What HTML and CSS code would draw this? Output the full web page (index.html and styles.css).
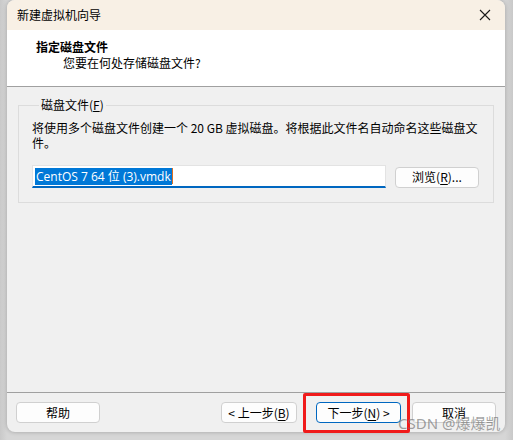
FILE: index.html
```html
<!DOCTYPE html>
<html lang="zh-CN">
<head>
    <meta charset="UTF-8">
    <title>新建虚拟机向导</title>
    <link rel="stylesheet" href="styles.css">
</head>
<body>
    <div class="window">
        <div class="titlebar">
            <span class="title">新建虚拟机向导</span>
            <svg class="close" width="12" height="12" viewBox="0 0 12 12">
                <path d="M1 1 L11 11 M11 1 L1 11" stroke="#1a1a1a" stroke-width="1.1" fill="none"/>
            </svg>
        </div>

        <div class="header">
            <div class="header-title">指定磁盘文件</div>
            <div class="header-sub">您要在何处存储磁盘文件?</div>
        </div>

        <div class="content">
            <fieldset class="group">
                <legend>磁盘文件(<u>F</u>)</legend>
                <p class="desc">将使用多个磁盘文件创建一个 20 GB 虚拟磁盘。将根据此文件名自动命名这些磁盘文件。</p>
                <div class="file-row">
                    <div class="file-input"><span class="selected">CentOS 7 64 位 (3).vmdk</span><span class="caret"></span></div>
                    <button class="btn browse">浏览(<u>R</u>)...</button>
                </div>
            </fieldset>
        </div>

        <div class="footer">
            <button class="btn">帮助</button>
            <div class="nav">
                <button class="btn back">&lt; 上一步(<u>B</u>)</button>
                <button class="btn next">下一步(<u>N</u>) &gt;</button>
                <button class="btn">取消</button>
            </div>
            <div class="highlight"></div>
            <div class="watermark">CSDN @爆爆凯</div>
        </div>
    </div>
</body>
</html>
```

FILE: styles.css
```css
body {
    margin: 0;
    background: linear-gradient(to right, #c9c9c9, #d6d6d6 7px, #d6d6d6 505px, #c9c9c9);
    font-family: 'Noto Sans CJK SC', 'Noto Sans', sans-serif;
    font-size: 12px;
    color: #000;
    height: 440px;
    overflow: hidden;
}
.window {
    width: 498px;
    height: 432px;
    margin-left: 7px;
    background-color: #f0f0f0;
    border-radius: 8px;
    box-shadow: 0 0 4px rgba(0,0,0,0.25);
    display: flex;
    flex-direction: column;
    position: relative;
}
.titlebar {
    height: 30px;
    flex-shrink: 0;
    background-color: #f8f0e5;
    border-radius: 8px 8px 0 0;
    display: flex;
    align-items: center;
    justify-content: space-between;
    padding: 0 10px 0 10px;
}
.title {
    line-height: 16px;
}
.close {
    margin-right: 4px;
}
.header {
    height: 57px;
    flex-shrink: 0;
    background-color: #fff;
    border-bottom: 1px solid #a0a0a0;
    padding-left: 29px;
    box-sizing: border-box;
}
.header-title {
    font-weight: bold;
    line-height: 16px;
    margin-top: 9px;
}
.header-sub {
    line-height: 16px;
    padding-left: 27px;
}
.content {
    flex: 1;
    padding: 10px 11px 0 11px;
}
.group {
    margin: 0;
    padding: 7px 14px 14px 13px;
    border: 1px solid #dcdcdc;
    min-width: 0;
}
.group legend {
    margin-left: 7px;
    padding: 0 2px;
    line-height: 16px;
}
.desc {
    margin: 0;
    line-height: 15px;
}
.file-row {
    display: flex;
    align-items: center;
    gap: 9px;
    margin-top: 15px;
}
.file-input {
    width: 354px;
    height: 23px;
    box-sizing: border-box;
    background-color: #fff;
    border: 1px solid #e3e3e3;
    border-bottom: 2px solid #0067c0;
    display: flex;
    align-items: center;
    padding-left: 2px;
}
.selected {
    background-color: #0078d7;
    color: #fff;
    font-family: 'Open Sans', 'Noto Sans CJK SC', sans-serif;
    font-size: 12px;
    line-height: 17px;
    padding: 0 1px;
}
.caret {
    width: 1px;
    height: 16px;
    background-color: #e07020;
}
.btn {
    height: 21px;
    width: 84px;
    background-color: #fdfdfd;
    border: 1px solid #d0d0d0;
    border-radius: 4px;
    font-family: 'Noto Sans CJK SC', 'Noto Sans', sans-serif;
    font-size: 12px;
    color: #000;
    padding: 0;
    line-height: 18px;
}
.btn u {
    text-underline-offset: 2px;
}
.browse {
    margin-top: 1px;
}
.footer {
    height: 40px;
    flex-shrink: 0;
    border-top: 1px solid #a0a0a0;
    border-radius: 0 0 8px 8px;
    display: flex;
    justify-content: space-between;
    align-items: flex-start;
    padding: 9px 9px 0 9px;
    box-sizing: border-box;
    position: relative;
}
.nav {
    display: flex;
}
.back {
    width: 76px;
    margin-right: 19px;
}
.next {
    width: 85px;
    margin-right: 11px;
    border-color: #0067c0;
}
.highlight {
    position: absolute;
    left: 296px;
    top: 0;
    width: 101px;
    height: 34px;
    border: 3px solid #f01a1a;
    border-radius: 2px;
}
.watermark {
    position: absolute;
    left: 391px;
    top: 22px;
    font-size: 15px;
    line-height: 17px;
    color: rgba(110,110,110,0.65);
    font-family: 'Noto Sans', 'Noto Sans CJK SC', sans-serif;
}
```
